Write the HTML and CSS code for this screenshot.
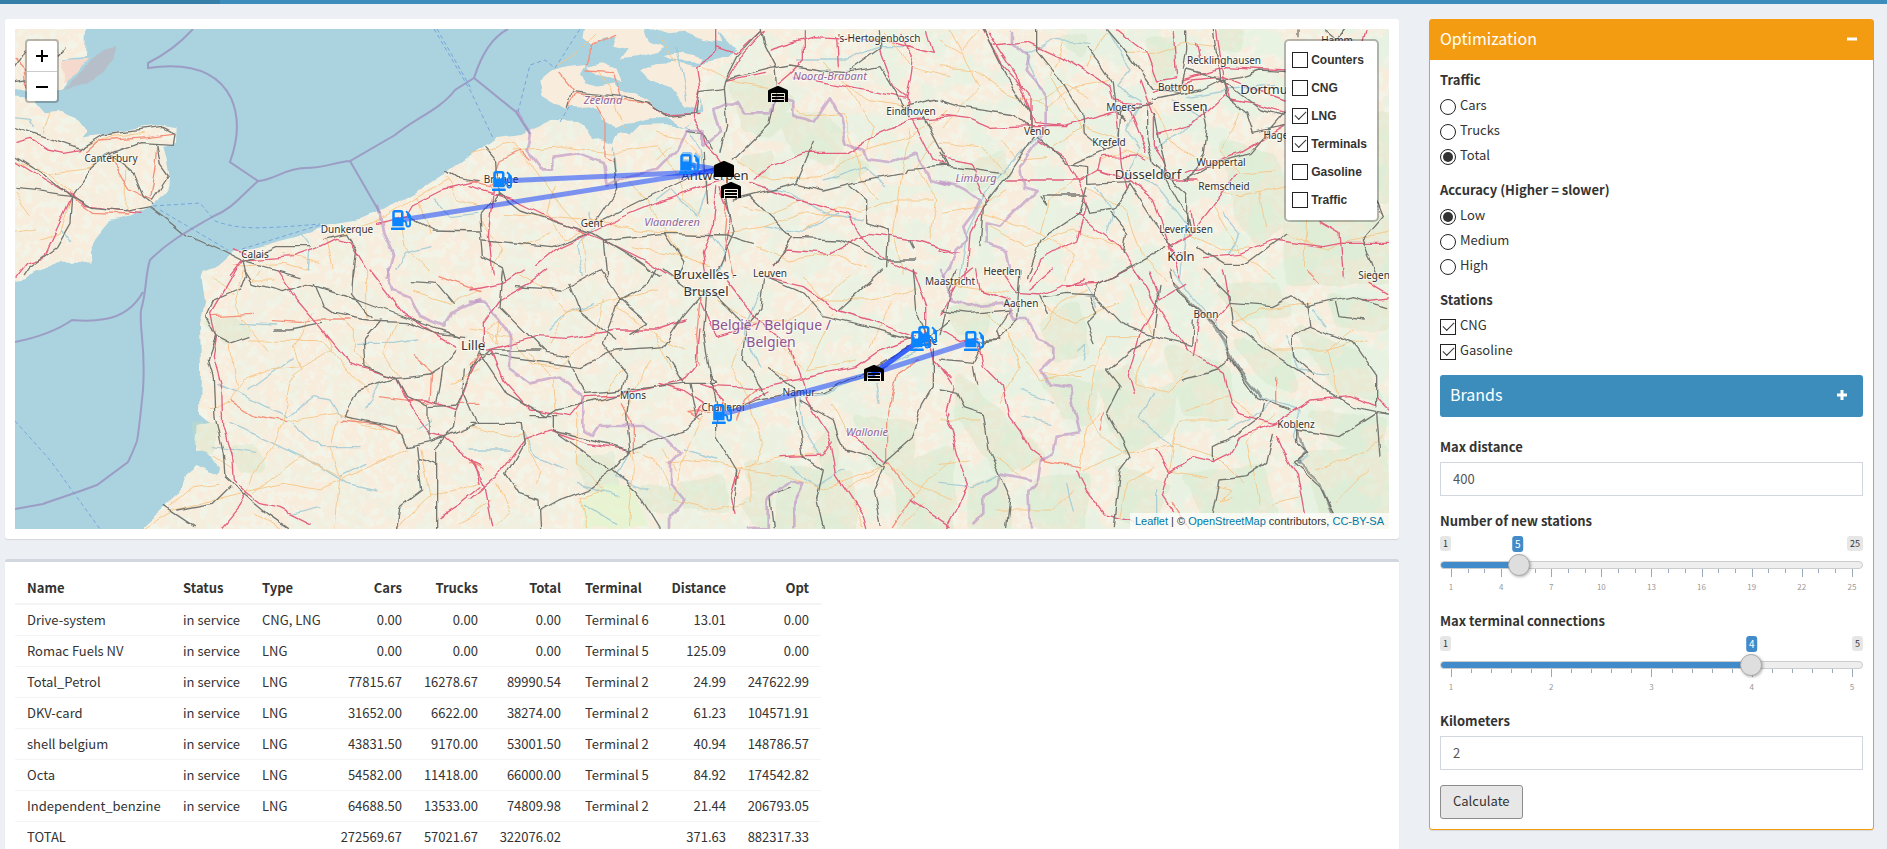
FILE: index.html
```html
<!DOCTYPE html>
<html lang="en">
<head>
<meta charset="utf-8">
<title>Station optimization</title>
<link rel="stylesheet" href="styles.css">
</head>
<body>
<header class="topbar"><div class="topbar-brand"></div></header>
<main class="layout">
<div class="main-col">
<section class="box map-box">
<div class="map">
<svg class="map-canvas" viewBox="15 29 1374 500" preserveAspectRatio="xMidYMid slice" role="img" aria-label="Map of Belgium">
<defs>
<filter id="woods" x="0" y="0" width="100%" height="100%">
<feTurbulence type="fractalNoise" baseFrequency=".03 .035" numOctaves="6" seed="8"/>
<feColorMatrix values="0 0 0 0 .80  0 0 0 0 .89  0 0 0 0 .76  8 0 0 0 -3.7"/>
</filter>
<filter id="fields" x="0" y="0" width="100%" height="100%">
<feTurbulence type="fractalNoise" baseFrequency=".12" numOctaves="3" seed="21"/>
<feColorMatrix values="0 0 0 0 .89  0 0 0 0 .92  0 0 0 0 .83  0 7 0 0 -3.400"/>
</filter>
<filter id="wiggle" x="0" y="0" width="100%" height="100%">
<feTurbulence type="fractalNoise" baseFrequency=".045" numOctaves="2" seed="4" result="n"/>
<feDisplacementMap in="SourceGraphic" in2="n" scale="8" xChannelSelector="R" yChannelSelector="G"/>
</filter>
<linearGradient id="fade" x1="0" x2="1" y1="0" y2="0">
<stop offset="0" stop-color="#fff" stop-opacity=".15"/><stop offset=".45" stop-color="#fff" stop-opacity=".5"/><stop offset=".68" stop-color="#fff" stop-opacity=".85"/><stop offset="1" stop-color="#fff"/>
</linearGradient>
<mask id="east"><rect x="0" y="0" width="1400" height="560" fill="url(#fade)"/></mask>
<symbol id="pump" viewBox="0 0 512 512"><path d="M336 448H16c-8.800 0-16 7.200-16 16v32c0 8.800 7.200 16 16 16h320c8.800 0 16-7.200 16-16v-32c0-8.800-7.200-16-16-16zm157.200-340.700l-81-81c-6.200-6.200-16.400-6.200-22.600 0l-11.300 11.300c-6.200 6.200-6.200 16.400 0 22.600L416 97.900V160c0 28.100 20.900 51.300 48 55.200V376c0 13.200-10.800 24-24 24s-24-10.800-24-24v-32c0-48.600-39.400-88-88-88h-8V64c0-35.300-28.700-64-64-64H96C60.700 0 32 28.700 32 64v352h288V304h8c22.100 0 40 17.900 40 40v27.800c0 37.700 27 72 64.500 75.900 43 4.300 79.500-29.500 79.500-71.700V152.600c0-17-6.800-33.300-18.800-45.300zM256 192H96V64h160v128z"/></symbol>
<symbol id="depot" viewBox="0 0 640 512"><path d="M504 352H136.400c-4.400 0-8 3.600-8 8l-.1 48c0 4.400 3.600 8 8 8H504c4.400 0 8-3.600 8-8v-48c0-4.400-3.600-8-8-8zm0 96H136.100c-4.400 0-8 3.600-8 8l-.1 48c0 4.400 3.600 8 8 8h368c4.400 0 8-3.600 8-8v-48c0-4.400-3.600-8-8-8zm0-192H136.600c-4.400 0-8 3.600-8 8l-.1 48c0 4.400 3.600 8 8 8H504c4.400 0 8-3.600 8-8v-48c0-4.400-3.600-8-8-8zm106.500-139L338.400 3.700a48.150 48.150 0 0 0-36.900 0L29.500 117C11.700 124.500 0 141.900 0 161.300V504c0 4.400 3.600 8 8 8h80c4.400 0 8-3.600 8-8V256c0-17.600 14.600-32 32.600-32h382.800c18 0 32.600 14.400 32.600 32v248c0 4.400 3.600 8 8 8h80c4.400 0 8-3.600 8-8V161.300c0-19.400-11.700-36.800-29.500-44.300z"/></symbol>
</defs>
<rect class="land" x="0" y="0" width="1400" height="560"/>
<rect x="0" y="0" width="1400" height="560" filter="url(#fields)" opacity=".8"/>
<g mask="url(#east)"><rect x="0" y="0" width="1400" height="560" filter="url(#woods)"/></g>
<g filter="url(#wiggle)">
<rect x="0" y="0" width="1400" height="560" fill="none"/>
<!-- north-west -->
<g transform="scale(.33333)">
<path class="sea" d="M258 80L255 170 185 178 215 200 190 270 30 272V295L100 300 135 340 180 335 240 360 262 390 245 412 300 405 400 388 490 378 530 385 528 425 490 435 500 480 508 520 505 560 470 600 440 625 380 650 330 662 290 710 275 740 277 792 225 785 180 785 150 805 110 812H610L650 800 700 755 800 735 900 705 960 680 1080 660 1150 630 1240 580 1340 515 1450 435V80Z"/>
<path class="sand" d="M185 180L262 176 215 232 190 250Z"/>
<path class="flat" d="M352 140L300 150 190 270 270 250 320 210Z"/>
<path class="minor" d="M45 480L150 520 215 580M130 400L150 340M150 520L270 505 330 460M380 500L378 640M90 640L45 580M215 590L180 700 120 720M45 700L110 690M250 440L330 410 430 400M980 710L1000 810M1000 710L1120 670 1250 590 1340 540M1250 590L1290 700M1205 680L1215 740 1290 810M1340 530L1370 600 1440 620M700 800L850 790 930 810M850 760L960 790"/>
<path class="river" d="M45 350L90 355 100 380M185 690L215 730M900 700L930 740 925 810M1190 810L1220 760 1290 740M1300 600L1350 650 1430 640"/>
<path class="pink" d="M45 430L90 418 140 450 190 460 240 452M45 480L140 540 215 585 260 620 340 632 420 640M45 835L80 790 130 775 215 590M690 830L730 780 880 770 950 745 1010 715 1050 725 1100 810M1130 670L1220 650 1240 615 1330 570 1440 545M700 750L740 760"/>
<path class="red" d="M260 455L300 420 440 410 520 400M470 440L465 500 450 590M330 470L390 570 455 600M225 600L280 640 380 645M45 175L75 205 80 260"/>
<path class="rail" d="M45 380L130 410 240 448 310 405 490 382 525 400 520 430 425 425 330 460 270 510 215 590 110 575 45 568M45 465L130 520 215 590 280 625 370 635 450 620 505 660 560 705 660 750 730 785 740 830M215 590L210 670 170 740 90 800 70 830M330 465L400 520 430 590 455 610M470 430L480 490 505 525 455 600M730 785L830 740 930 740M975 715L1040 700 1070 750 1060 830M740 785L900 830M1235 655L1300 690 1440 693M1340 515L1370 535 1440 545M45 200L75 150M45 245L80 240M175 165L198 140"/>
<path class="border" d="M1135 620L1150 700 1178 760 1160 830"/>
</g>
<!-- north -->
<g transform="translate(470 0) scale(.33333)">
<path class="sea" d="M-5 465L80 415 150 405 240 365 330 370 370 410 430 430 445 395 480 405 510 375 600 372 655 385 640 395 690 400 650 380 700 330 690 260 650 215 690 190 780 170 800 150 760 110 730 80H-5Z"/>
<path class="land" d="M205 245L240 215 300 200 345 195 330 215 345 250 380 260 430 250 450 275 500 280 550 320 585 350 640 345 680 335 690 350 640 380 600 355 540 355 500 365 450 370 435 378 400 365 390 335 350 320 310 318 290 330 240 300 215 285ZM345 80L340 110 370 135 400 110 440 105 430 140 470 150 450 180 500 175 560 160 580 140 540 125 525 80ZM345 200L400 190 440 205 455 240 430 235 380 225ZM510 210L560 190 620 185 680 200 700 260 690 330 650 320 600 260 540 240ZM540 80L600 100 640 95 700 120 760 130 740 80ZM580 165L640 155 700 170 690 185 620 180ZM760 80L800 110 890 100 900 80Z"/>
<path class="forest" d="M790 260L900 240 960 300 900 400 830 380ZM940 360L1050 350 1120 420 1080 480 980 450ZM1130 470L1180 500 1150 530 1100 520ZM830 480L900 470 880 520Z"/>
<path class="river" d="M560 600L600 570 680 650 710 560 690 450 660 400M360 640L375 680 320 740 340 830M720 700L760 760 740 830M860 560L960 580 1060 640 1180 660M980 180L1130 180 1230 140 1320 140M620 140L650 300M880 680L1000 700 1100 640M430 440L440 560M1060 540L1180 500 1250 560"/>
<path class="minor" d="M0 460L130 430 200 520 250 590 340 690 350 820M130 450L280 440 430 460 560 440 620 510 640 600 690 650M260 200L330 150 380 100M380 210L430 290 460 380M570 110L620 190M250 560L230 640 280 720 340 690M100 640L250 650 380 660 500 690 640 700 740 705 880 680 990 640 1110 650M480 540L530 600 590 700 640 790M800 480L900 540 1050 530 1190 450 1320 410 1430 330M690 470L640 420 560 400M700 200L800 250 920 270 1000 350 1120 340 1150 440 1180 540 1230 600M1320 390L1290 540 1270 700 1300 820M1060 190L1180 300 1320 320M1000 700L1100 620 1170 640 1280 600 1390 600M480 740L600 760 720 800M860 740L960 780 1080 760 1190 800M1130 260L1210 380 1190 450M1240 100L1330 200 1440 230M30 660L100 750 60 820M150 740L240 700M560 480L600 440M820 620L900 640 1000 600M1400 420L1340 500 1400 600 1380 720"/>
<path class="red" d="M345 195L370 130 440 100M300 320L320 280 450 300 530 310M380 320L405 360 405 470 430 480M270 220L310 270M345 210L430 215 450 290M0 545L60 560 90 480 150 450 180 480M770 590L760 700 790 830"/>
<path class="pink" d="M740 80L740 150 680 200 690 270 670 350 700 400 710 440 740 470 760 500M740 140L800 160 870 95M880 95L820 160 765 245 880 220M900 150L1030 110 1240 120 1390 160 1370 95M1000 95L1000 180 960 220 925 250M970 230L1130 260 1310 295 1330 180 1290 100M1230 150L1270 260 1310 290 1320 350M850 540L900 500 1000 460 1130 460 1230 400 1320 360 1440 350M840 550L980 600 1130 640 1180 720 1250 780 1340 820M760 540L670 570 560 610 440 660 380 690 270 740 200 800M0 560L130 600 250 660 400 720 520 780 600 830M70 570L55 700 70 830M740 560L730 680 700 760 710 820M750 560L780 640 760 780M910 800L950 750 1080 760 1200 700 1330 720 1440 750M1330 360L1390 480 1440 500M530 310L580 345 690 340M1105 200L1100 110"/>
<path class="rail" d="M295 325L310 275 460 290 530 310 590 350 680 340 690 275 760 265 765 240 900 205 960 195 1050 210 1140 215 1230 200 1290 300 1320 350M870 85L880 130 915 200 920 270 900 370 830 440 790 480M760 260L770 380 750 460M650 395L700 400 730 450M45 440L80 480 85 580 30 650 40 770 100 800 110 840M85 580L150 630 270 670 370 700 470 760 570 830M380 660L440 570 430 470M380 670L520 600 640 540 730 500M40 720L250 740 350 700M400 720L580 700 770 705 850 730M770 590L790 700 740 810M790 600L910 570 980 550 1060 570 1140 550 1300 520 1310 505 1440 498M840 590L970 715 910 800M970 715L1110 720 1240 780 1340 780M1140 555L1190 600 1190 670 1255 690 1250 800M980 550L1030 430M1140 210L1230 145 1225 95M1360 350L1440 500M1310 320L1400 300M580 700L640 790 620 830M700 460L710 610M400 720L410 830M870 95L800 170 765 240M1320 720L1330 750"/>
<path class="border" d="M135 335L180 400 170 450 210 505 250 505 250 470 320 460 400 490 410 560 470 530 560 510 620 450 650 390 700 390 700 440 750 400 730 330 800 300 820 340 900 340 920 290 970 300 970 350 1030 370 1080 295 1110 350 1130 430 1180 450 1190 480 1260 490 1340 460 1380 540 1440 555"/>
</g>
<!-- north-east -->
<g transform="translate(940 0) scale(.33333)">
<path class="forest" d="M380 120L430 110 420 160ZM630 130L690 120 700 200 650 240ZM850 90L900 100 890 140 850 140ZM850 430L1000 480 1040 640 960 720 900 650 880 540ZM1040 680L1350 660 1350 840 1050 840ZM80 500L180 470 200 520 100 560ZM1320 350L1350 360 1350 600 1300 600Z"/>
<path class="river" d="M500 90L570 210 530 260 600 300 560 390 600 450 560 520 650 560 740 680 720 840M300 400L200 500 130 590 80 700 60 840M450 130L340 120 260 160 300 270M640 440L720 400 780 350 700 300M850 640L900 700 860 760M740 290L860 270 1000 250M1000 350L1050 330M470 560L520 640 500 700"/>
<path class="minor" d="M0 200L100 210 200 280 330 320 400 260 520 240M30 90L120 260 60 330 0 380M0 430L130 440 200 520M370 130L330 230 390 330 430 400M400 540L330 600 300 700 130 640M440 560L560 640 600 760 680 840M340 440L430 380 540 420M770 540L900 590 1040 560M440 200L500 100M900 340L840 450 900 520 1000 510M820 620L900 760 1000 830M300 700L400 760 380 840M0 640L120 620 200 570M740 700L850 750 930 740M1040 700L1160 750 1200 730 1340 700M150 680L260 740 400 690 540 740M450 290L380 250 290 310M1100 660L1090 800M630 300L690 420 760 470M560 160L640 160 730 130 840 140M480 480L560 450 640 480M120 90L60 160 0 120M180 420L230 480 320 470M960 580L980 680"/>
<path class="pink" d="M125 85L190 200 270 290 270 390M145 100L230 230 280 370 380 380M160 135L260 125 400 190 510 260 520 300 600 310M0 345L80 355 150 385 270 380 370 380 540 330 640 310M530 90L620 160 650 240 710 230 700 95M830 90L850 240 870 300 930 310 1035 340M730 240L860 200 1035 210M640 280L760 240 850 230 950 270 1035 300M200 540L420 540 470 510 570 540 640 600 680 700 700 760M290 420L380 480 430 570 440 620 410 720 300 780 270 840M410 640L460 680 540 740 600 840M600 240L640 350 640 430 690 540 770 540M530 330L545 500 560 560M470 510L480 470 590 465 620 480M730 520L900 460 1035 380M750 640L760 700 690 740 720 830M790 770L900 760 1000 720 1150 740 1200 730 1340 730M1140 665L1200 700 1210 830M0 470L90 490 140 600 90 700 80 840M0 750L60 760M770 680L840 590 890 520M650 400L760 370 860 280M620 460L570 330M1280 90L1270 130M780 180L770 130"/>
<path class="rail" d="M130 90L200 230 270 340 270 390M290 85L290 150 370 250 425 340 430 400 490 450M0 300L60 320 220 345 270 390M290 410L380 490 440 500 440 550 570 545M400 490L540 430 545 330 640 310M500 90L550 150 640 270 720 280 740 210 850 240 860 290M440 140L480 190 520 250 530 330 560 360M740 90L740 150 730 210M820 90L840 240 900 230 960 210 1035 215M620 310L620 410 640 490 740 580 740 680M640 340L660 440 680 540 740 650 750 700M280 410L200 530 130 620 120 740M180 520L0 495M440 560L420 640 300 720 260 830M570 550L660 690 700 740M730 540L800 500 930 460 1035 340M300 590L320 615 310 585 440 585M430 600L450 640 520 630 570 550M510 640L560 700 550 760M520 830L680 740M770 740L850 790 920 790 1000 730 1040 700M640 300L780 270 840 240 960 330 1035 350M860 290L920 340 940 400 1035 380M790 330L800 380 790 460 740 540M1310 600L1330 650 1270 720 1310 830M1080 90L1080 110M1160 90L1190 115 1210 90M0 460L20 490"/>
<path class="border" d="M210 90L210 130 270 170 260 210 320 290 320 380 240 500 250 560 290 570 180 680 140 670 140 730 200 750 210 810M0 545L60 560 80 570 120 600 100 640 70 680 80 720 50 750 30 800 10 830"/>
</g>
<!-- south-west -->
<g transform="translate(0 270) scale(.33333)">
<path class="sea" d="M30 38L75 30 110 -2H612L605 20 615 100 600 160 603 300 600 430 630 455 590 465 585 545 620 545 660 590 655 615 590 585 560 610 540 670 500 705 440 755 405 790H30Z"/>
<path class="forest" d="M700 540L760 540 780 590 730 590ZM630 160L700 150 740 190 680 210ZM590 470L640 470 630 540 600 530Z"/>
<path class="river" d="M650 340L740 380 860 440 940 380 990 390 1020 440M690 460L820 520 960 590 1040 640 1130 660M640 530L770 550M1020 620L1100 580M1070 220L1180 220 1250 210M720 160L830 165M1250 480L1300 450M870 450L960 530 1080 530M750 360L830 300 880 260M870 730L960 710M1100 420L1140 340"/>
<path class="minor" d="M690 395L730 330 810 300 900 290 1000 240 980 190M750 210L970 212 1060 320 1110 370M690 220L700 300 710 350M730 0L700 110 800 240M780 0L760 30 820 30M850 450L870 330 905 300 880 230 940 130M850 455L1010 430 1080 460 1200 490M850 455L820 530 760 610 740 670M1010 450L990 530 1020 620 1005 775M740 665L850 640 960 660 1020 630 1220 540M1020 620L900 560 760 670M510 710L580 650 660 640M400 790L520 720 730 670M1100 0L1100 140M1000 130L1060 180 1060 240 1120 300M1200 320L1150 250 1190 150M1290 680L1260 540M1290 680L1440 640M1190 770L1290 680M630 410L690 400M640 20L700 80M1240 60L1350 100 1440 60M1350 340L1440 300M640 560L700 600M1380 760L1440 730M770 730L840 775"/>
<path class="red" d="M640 137L760 130M820 155L900 160 960 150 1050 150M695 395L760 435 860 455M1020 450L1130 460 1210 500M1290 390L1295 310 1240 260M1140 380L1290 400M1370 400L1440 400M1320 20L1440 65"/>
<path class="pink" d="M710 0L670 70 635 130 650 200 640 260 665 350 668 470 695 560 700 630 740 670 780 700 840 715 930 760M740 670L715 710 660 775M830 0L890 90 960 170 1050 280 1190 325 1215 380 1250 440 1290 490 1330 500 1420 580 1440 640M1110 0L1210 130 1370 230M1440 260L1400 340 1370 420 1280 390 1220 390M1320 740L1380 700 1440 650M1420 580L1440 590"/>
<path class="rail" d="M735 0L760 40 850 65 920 40 1080 90 1240 150 1380 200M735 20L720 60 640 95 620 140 650 200 690 220 750 200M650 200L625 270 640 320 645 440 670 550 675 620 740 680 800 730 865 775M690 650L640 700 530 720M940 40L970 110 1000 130 1100 150 1220 155 1310 190 1400 200M1140 150L1090 210 1095 290 1190 325 1290 315 1330 290 1370 240M1190 325L1220 380 1290 410 1370 405 1440 240M1190 325L1070 360 1030 440 1190 470 1220 530 1290 515 1330 500M1290 410L1290 510M1370 405L1360 470 1310 530 1310 775M1250 530L1265 660 1200 710 1190 775M1330 290L1310 400M1390 300L1385 360 1430 460 1330 500M1060 0L1055 70 1110 140M490 710L580 770M820 180L870 180 970 160M1240 35L1310 40 1360 100M1255 565L1310 585"/>
<path class="border" d="M1160 0L1180 60 1230 80 1260 140 1330 170 1350 130 1440 90"/>
</g>
<!-- south -->
<g transform="translate(470 270) scale(.33333)">
<path class="forest" d="M330 570L420 560 430 640 360 650ZM520 660L620 670 600 720 540 710ZM640 650L750 630 760 720 650 700ZM960 600L1130 620 1150 770 920 770ZM830 700L900 660 880 770ZM1170 450L1330 470 1300 640 1200 560ZM1280 600L1440 540V775H1300ZM1090 480L1040 530 1090 620ZM840 580L940 590 930 640 850 650Z"/>
<path class="pale" d="M330 690Q400 630 500 650L530 775H340Z"/>
<path class="river" d="M240 180L290 130 370 100M990 380L1060 370 1200 310 1330 250 1400 180M990 380L1000 480 1050 560M150 480L200 560 290 600M480 540L440 620 530 660M340 700L440 760M870 70L820 190 870 290M960 590L1040 650 1120 600M640 540L740 570M1220 340L1230 400M0 540L120 540M320 640L450 680"/>
<path class="minor" d="M0 180L120 200 190 280 260 290 380 190 400 90M140 10L230 60 290 130 440 90 560 60M290 130L240 220M440 110L560 200 640 240M460 290L400 390 330 400M550 190L600 300M740 90L850 160 960 150 1080 70 1140 10M1000 20L1060 90 1200 90 1340 60M830 190L780 290 830 380 880 520 840 600 840 700M890 290L960 330M1090 130L1010 300 1160 270M1260 100L1200 230M700 440L640 560 610 690 740 720 830 700M805 595L700 570 590 580M810 595L960 620 1060 660 1250 580M805 595L940 560 1030 550M480 540L560 570 600 660M480 540L490 600 475 770M320 430L320 580 400 660 330 680M180 250L250 330 260 440M0 470L120 500 160 490M160 500L210 600 200 640M80 640L120 730 80 770M330 680L350 770M1250 580L1340 640 1440 690M1320 680L1440 570M1250 580L1130 660 1180 770M1090 400L1130 480M580 540L620 600M1000 300L920 200M1360 700L1300 770M540 270L460 440M60 690L0 740"/>
<path class="stripe" d="M50 180L90 150 80 220ZM70 205L100 170"/>
<path class="red" d="M1340 270L1280 310 1250 450 1250 570 1330 680 1270 770M790 640L810 600M690 450L660 430 720 420M800 450L820 390 870 345M0 580L40 600M490 550L490 470 450 400M0 290L30 250M690 80L680 200 690 280"/>
<path class="pink" d="M0 60L100 40 160 0M40 240L40 160 90 90 180 40 230 0M50 240L200 200 290 205 440 180 560 180 650 150M60 240L100 330 180 420 300 440 350 380 450 375 560 350 640 330 680 280 690 180M0 690L80 620 160 510 240 480 350 520 480 540M0 570L40 640 65 770M690 90L740 200 870 160M680 340L720 350 850 355 980 330 1050 310 1160 290 1230 240 1340 200M830 400L900 360M770 30L870 160 960 230 1000 340 1010 390 1080 500 1100 620 1180 740 1190 775M870 20L1000 50 1100 120 1200 150 1330 200M1330 0L1370 110 1370 200 1390 270 1440 320M570 340L640 360 700 400 680 440M1440 430L1430 460 1440 480M720 350L760 390 750 410M930 560L1060 555 1090 510M800 600L780 680 795 730M1130 480L1250 580M1320 690L1440 770"/>
<path class="rail" d="M30 250L110 370 230 440 260 420 430 380 480 365M30 250L190 270 330 290 440 240 580 230 640 140 690 80M0 300L60 240 210 240M100 0L90 110 230 250 290 260M140 50L280 60 390 0M300 40L330 120 440 210M390 0L450 90 400 220 470 310 460 360 350 370 290 270M560 0L540 40 450 90 530 160 480 190M580 0L660 60 710 70 700 190 720 310 740 400 740 500 800 600 790 720M480 360L640 340 740 340 720 310M660 340L680 440M700 430L640 480 480 540 250 480 250 440M480 365L470 440 480 540 430 600 350 660 270 690 215 720M0 460L150 460 160 520 110 610 150 670 210 690 215 775M430 600L500 660 570 775M180 440L260 440M790 420L860 390 960 370 1060 365 1180 310 1320 230M730 70L830 170 820 270 890 370M890 290L970 355 990 490 1000 560 1060 600 1040 690 1060 775M990 390L1090 450 1120 540 1200 560 1240 590 1210 660 1230 760M1240 580L1330 500 1360 400 1390 350 1390 240M880 30L870 120 820 180M880 20L1000 70 1060 140 1190 170 1330 210M1110 120L1240 0M1330 0L1340 120 1380 200 1440 150M910 770L900 680 960 650M590 260L640 340M250 480L420 600"/>
<path class="border" d="M0 95L40 95 90 150 120 190 120 300 180 340 270 320 340 380 340 480 370 495 390 465 520 465 590 510 630 550 600 580 600 640 640 690 600 740 600 775M840 775L890 770 890 690 960 630 1000 640 970 700 970 775"/>
</g>
<!-- south-east -->
<g transform="translate(940 270) scale(.33333)">
<path class="forest" d="M310 160L400 110 440 240 350 260ZM480 320L560 300 620 380 700 350 680 480 560 540 510 440ZM690 240L860 300 860 440 740 420ZM900 220L1040 260 1060 350 980 330ZM1120 430L1330 460 1310 560 1180 500ZM1080 180L1250 260 1310 380 1200 360ZM850 60L1000 50 1040 120 900 140ZM60 330L180 440 300 560 180 600 60 440ZM740 620L960 600 1000 720 820 770ZM1100 560L1330 540 1340 770 1160 740ZM540 600L680 650 620 770 540 740ZM100 660L180 620 200 770 100 770ZM290 640L440 620 420 770 280 760ZM320 330L460 350 440 460 380 430ZM1180 90L1340 100 1330 170 1200 160ZM40 120L140 110 130 180 60 180Z"/>
<path class="river" d="M700 0L760 80 830 160 870 260 960 380 1080 420 1060 500 1100 560 1060 590M410 240L440 220 430 270M240 360L340 400M440 40L470 110M0 640L100 650 180 610M650 660L650 770M860 480L940 440 1000 390M1040 200L1080 300 1160 310M640 370L600 440 700 530M1120 120L1160 170M380 640L400 720M250 440L330 460"/>
<path class="minor" d="M0 40L130 60 210 70M140 130L210 190 240 290 180 400M210 200L300 330 470 290 500 200 600 200M300 100L400 160 530 100M440 60L360 100 310 180M470 290L440 420 480 500 560 550 700 530 720 450 860 450M570 40L640 200 580 340 680 370 750 300M700 520L830 560 910 640M700 530L690 600 800 620M0 450L120 450M300 310L420 320M160 560L240 620M430 600L560 540M170 720L330 720 400 660M640 590L560 640 540 740M860 100L1000 240 1160 240 1280 210M940 440L860 380 740 420M1160 240L1200 380M1000 430L920 520 960 700M1130 600L1280 540 1330 500M1000 700L1080 680M880 160L960 120 1110 100M1150 250L1240 180M420 600L440 480 480 430M830 650L870 660 840 690 870 680M1180 700L1280 600M0 580L90 570M240 600L300 560"/>
<path class="red" d="M480 480L490 430M1010 320L1010 400M300 570L420 590M700 700L750 780M1100 0L1140 40"/>
<path class="pink" d="M180 0L230 70 300 75 370 45 480 40 560 0M100 0L50 40 0 130M0 180L60 215 110 200 130 290 190 350 210 440 240 480 270 540 310 570M110 0L120 60 210 90M580 0L620 50 650 105 710 200 740 240 790 270 850 310 870 400 890 430 1000 460 1080 410 1110 390 1230 380 1310 410M650 105L600 190 565 320 580 370M780 130L760 260M0 290L40 350 20 430 50 550 85 640 50 720 20 775M410 600L440 660 500 735 580 755M650 540L690 605 670 680 700 725M690 605L760 560 820 575 870 550 900 500 1010 460M1010 500L1040 570 1070 620 1090 730M850 0L870 100 830 150M630 0L660 90 740 40M270 60L340 0M1270 90L1350 80M1310 380L1350 420M1290 40L1340 70M440 30L380 50"/>
<path class="rail" d="M0 200L30 60 50 0M0 120L90 130 210 120 170 180 180 210 130 215 100 280 0 270M240 0L230 150 170 210 120 210M310 80L380 70 460 75 480 40 560 0M460 75L540 160 640 200 755 230 760 150M640 200L560 250 500 300 540 350 500 430 550 520 570 560 540 600 520 770M660 40L640 200M690 0L700 50 790 130 860 200 870 270 950 380 1050 420M870 270L830 300 730 330M790 0L870 80 880 160 980 240 1090 310 1170 370 1240 410 1340 430M870 100L1000 110 1060 80 1100 110 1240 80 1340 110M1100 100L1110 170 1060 200 1060 260 1120 310M1110 170L1240 220 1310 320 1310 410M1070 470L1070 520 1100 550 1060 580 1140 650 1180 730M1000 490L980 580 920 620 840 630 820 730M1070 480L1200 500 1310 430 1320 560M970 400L960 440 880 500 820 530 820 570M0 360L50 370 70 410 130 430 150 550 210 680 200 770M100 290L110 345M450 80L470 130 440 160 465 215M1190 100L1200 140 1270 150M1310 430L1350 435M300 80L325 130"/>
<path class="railb" d="M700 40L800 140 855 210 880 280 960 375M1070 480L1095 550 1070 575 1140 640 1175 730"/>
<path class="border" d="M0 0L20 40 30 90 90 110 200 100 220 150 260 150 290 210 340 230 340 260 300 300 330 340 390 350 400 410 420 490 350 500 340 550 300 570 290 640 265 660 270 775M270 630L180 610 170 650 130 680 130 730 100 760"/>
</g>
</g>
<g class="sea-lines">
<path d="M193 29Q174 50 148 63V68C190 62 218 72 231 98C240 118 238 140 230 162L258 181C275 180 285 168 305 168C325 168 335 162 350 161L395 135C415 118 440 110 455 90L474 78L516 112L530 134M258 181C240 197 232 209 212 217C190 230 170 240 150 260C145 275 147 290 141 310C139 330 146 345 143 390C140 420 139 430 137 441Q133 452 128 462L97 485C70 495 60 498 43 504L15 509M143 292Q130 315 105 319Q90 322 72 320C55 332 35 338 15 342M350 161L380 213M474 78Q486 40 508 29"/>
<path class="ferry" d="M434 29L470 90 494 140M437 29L472 90M518 112L530 65 545 60 555 68 580 29M153 206L200 203 215 221C240 230 260 229 320 224M160 210L228 250M15 421L50 460 100 529M242 249L320 225M560 122L570 105"/>
</g>
<g class="labels">
<text x="111" y="162">Canterbury</text><text x="347" y="233">Dunkerque</text><text x="255" y="258">Calais</text>
<text x="879" y="42">'s-Hertogenbosch</text><text x="911" y="115">Eindhoven</text><text x="501" y="183">Brugge</text><text x="592" y="227">Gent</text><text x="770" y="277">Leuven</text>
<text x="1037" y="135">Venlo</text><text x="1224" y="64">Recklinghausen</text><text x="1176" y="91">Bottrop</text><text x="1121" y="111">Moers</text><text x="1109" y="146">Krefeld</text><text x="1221" y="166">Wuppertal</text><text x="1224" y="190">Remscheid</text><text x="1186" y="233">Leverkusen</text><text x="1337" y="44">Hamm</text><text x="1279" y="139">Hagen</text><text x="1002" y="275">Heerlen</text><text x="950" y="285">Maastricht</text><text x="1374" y="279">Siegen</text><text x="1021" y="307">Aachen</text><text x="1206" y="318">Bonn</text><text x="1296" y="428">Koblenz</text>
<text x="633" y="399">Mons</text><text x="723" y="411">Charleroi</text><text x="799" y="396">Namur</text><text x="925" y="345">Liège</text>
<g class="city"><text x="715" y="180">Antwerpen</text><text x="705" y="279">Bruxelles -</text><text x="706" y="296">Brussel</text><text x="473" y="350">Lille</text><text x="1148" y="179">Düsseldorf</text><text x="1190" y="111">Essen</text><text x="1272" y="94">Dortmund</text><text x="1181" y="261">Köln</text></g>
<g class="country"><text x="771" y="330">België / Belgique /</text><text x="771" y="347">Belgien</text></g>
<g class="region"><text x="830" y="80">Noord-Brabant</text><text x="603" y="104">Zeeland</text><text x="672" y="226">Vlaanderen</text><text x="976" y="182">Limburg</text><text x="867" y="436">Wallonie</text></g>
</g>
<g class="routes"><path d="M401 220L723 169"/><path d="M503 181L723 171"/><path d="M690 165L723 170"/><path d="M874 373L723 414"/><path d="M874 373L974 341"/><path d="M874 373L920 340"/><path d="M874 373L927 336"/></g>
<g class="pumps"><use href="#pump" x="391" y="210" width="20" height="20"/><use href="#pump" x="492" y="171" width="20" height="20"/><use href="#pump" x="679" y="154" width="20" height="20"/><use href="#pump" x="680" y="152" width="20" height="20" opacity=".45"/><use href="#pump" x="910" y="331" width="20" height="20"/><use href="#pump" x="917" y="326" width="20" height="20"/><use href="#pump" x="964" y="331" width="20" height="20"/><use href="#pump" x="712" y="404" width="20" height="20"/></g>
<g><use href="#depot" x="768" y="86" width="20" height="16"/><use href="#depot" x="714" y="161" width="20" height="16"/><path d="M716 166h16v11h-16z"/><use href="#depot" x="721" y="182" width="20" height="16"/><use href="#depot" x="864" y="365" width="20" height="16"/></g>
</svg>
<div class="zoom"><button type="button" aria-label="Zoom in"><svg viewBox="0 0 14 14"><path d="M7 1v12M1 7h12"/></svg></button><button type="button" aria-label="Zoom out"><svg viewBox="0 0 14 14"><path d="M1 7h12"/></svg></button></div>
<div class="layers">
<label><input type="checkbox">Counters</label>
<label><input type="checkbox">CNG</label>
<label><input type="checkbox" checked>LNG</label>
<label><input type="checkbox" checked>Terminals</label>
<label><input type="checkbox">Gasoline</label>
<label><input type="checkbox">Traffic</label>
</div>
<div class="credit"><a href="#">Leaflet</a> | © <a href="#">OpenStreetMap</a> contributors, <a href="#">CC-BY-SA</a></div>
</div>
</section>
<section class="box table-box">
<table class="stations">
<colgroup><col class="c-name"><col class="c-status"><col class="c-type"><col class="c-cars"><col class="c-trucks"><col class="c-total"><col class="c-terminal"><col class="c-distance"><col class="c-opt"></colgroup>
<thead><tr><th>Name</th><th>Status</th><th>Type</th><th class="num">Cars</th><th class="num">Trucks</th><th class="num">Total</th><th>Terminal</th><th class="num">Distance</th><th class="num">Opt</th></tr></thead>
<tbody>
<tr><td>Drive-system</td><td>in service</td><td>CNG, LNG</td><td class="num">0.00</td><td class="num">0.00</td><td class="num">0.00</td><td>Terminal 6</td><td class="num">13.01</td><td class="num">0.00</td></tr>
<tr><td>Romac Fuels NV</td><td>in service</td><td>LNG</td><td class="num">0.00</td><td class="num">0.00</td><td class="num">0.00</td><td>Terminal 5</td><td class="num">125.09</td><td class="num">0.00</td></tr>
<tr><td>Total_Petrol</td><td>in service</td><td>LNG</td><td class="num">77815.67</td><td class="num">16278.67</td><td class="num">89990.54</td><td>Terminal 2</td><td class="num">24.99</td><td class="num">247622.99</td></tr>
<tr><td>DKV-card</td><td>in service</td><td>LNG</td><td class="num">31652.00</td><td class="num">6622.00</td><td class="num">38274.00</td><td>Terminal 2</td><td class="num">61.23</td><td class="num">104571.91</td></tr>
<tr><td>shell belgium</td><td>in service</td><td>LNG</td><td class="num">43831.50</td><td class="num">9170.00</td><td class="num">53001.50</td><td>Terminal 2</td><td class="num">40.94</td><td class="num">148786.57</td></tr>
<tr><td>Octa</td><td>in service</td><td>LNG</td><td class="num">54582.00</td><td class="num">11418.00</td><td class="num">66000.00</td><td>Terminal 5</td><td class="num">84.92</td><td class="num">174542.82</td></tr>
<tr><td>Independent_benzine</td><td>in service</td><td>LNG</td><td class="num">64688.50</td><td class="num">13533.00</td><td class="num">74809.98</td><td>Terminal 2</td><td class="num">21.44</td><td class="num">206793.05</td></tr>
<tr><td>TOTAL</td><td></td><td></td><td class="num">272569.67</td><td class="num">57021.67</td><td class="num">322076.02</td><td></td><td class="num">371.63</td><td class="num">882317.33</td></tr>
</tbody>
</table>
</section>
</div>
<aside class="panel">
<div class="panel-head"><h2>Optimization</h2><button type="button" class="tool" aria-label="Collapse"><svg viewBox="0 0 12 12"><path d="M1 6h10"/></svg></button></div>
<form class="panel-body">
<fieldset><legend>Traffic</legend>
<label class="choice"><input type="radio" name="traffic">Cars</label>
<label class="choice"><input type="radio" name="traffic">Trucks</label>
<label class="choice"><input type="radio" name="traffic" checked>Total</label></fieldset>
<fieldset><legend>Accuracy (Higher = slower)</legend>
<label class="choice"><input type="radio" name="accuracy" checked>Low</label>
<label class="choice"><input type="radio" name="accuracy">Medium</label>
<label class="choice"><input type="radio" name="accuracy">High</label></fieldset>
<fieldset><legend>Stations</legend>
<label class="choice"><input type="checkbox" checked>CNG</label>
<label class="choice"><input type="checkbox" checked>Gasoline</label></fieldset>
<div class="brands"><h3>Brands</h3><button type="button" class="tool" aria-label="Expand"><svg viewBox="0 0 12 12"><path d="M1 6h10M6 1v10"/></svg></button></div>
<div class="field"><label for="dist">Max distance</label><input id="dist" class="text" type="text" value="400"></div>
<div class="field"><label for="count">Number of new stations</label>
<div class="slider" style="--pos:.1667">
<div class="badges"><span>1</span><span>25</span><output for="count">5</output></div>
<input id="count" type="range" min="1" max="25" value="5">
<div class="ticks"><i class="major">1</i><i></i><i></i><i class="major">4</i><i></i><i></i><i class="major">7</i><i></i><i></i><i class="major">10</i><i></i><i></i><i class="major">13</i><i></i><i></i><i class="major">16</i><i></i><i></i><i class="major">19</i><i></i><i></i><i class="major">22</i><i></i><i></i><i class="major">25</i></div>
</div></div>
<div class="field"><label for="conn">Max terminal connections</label>
<div class="slider" style="--pos:.75">
<div class="badges"><span>1</span><span>5</span><output for="conn">4</output></div>
<input id="conn" type="range" min="1" max="5" value="4">
<div class="ticks"><i class="major">1</i><i></i><i></i><i></i><i></i><i class="major">2</i><i></i><i></i><i></i><i></i><i class="major">3</i><i></i><i></i><i></i><i></i><i class="major">4</i><i></i><i></i><i></i><i></i><i class="major">5</i></div>
</div></div>
<div class="field"><label for="km">Kilometers</label><input id="km" class="text" type="text" value="2"></div>
<button type="button" class="calc">Calculate</button>
</form>
</aside>
</main>
</body>
</html>
```
FILE: styles.css
```css
* { box-sizing: border-box; }
body {
  margin: 0;
  background: #ecf0f5;
  color: #333;
  font: 13px/20px "Noto Sans CJK JP", "Noto Sans", sans-serif;
  overflow-x: hidden;
}
button, input { font: inherit; color: inherit; }
.topbar { height: 4px; background: #3c8dbc; }
.topbar-brand { width: 220px; height: 4px; background: #367fa9; }
.layout {
  display: grid;
  grid-template-columns: minmax(0, 1394fr) minmax(0, 445fr);
  gap: 30px;
  align-items: start;
  padding: 15px 13px 0 5px;
}
.main-col { display: grid; gap: 20px; }
.box { background: #fff; border-radius: 3px; box-shadow: 0 1px 1px rgba(0, 0, 0, .1); padding: 10px; }
.table-box { border-top: 3px solid #d2d6de; padding: 10px 10px 0; }

/* map */
.map { position: relative; height: 500px; overflow: hidden; background: #aad3df; }
.map-canvas { display: block; width: 100%; height: 100%; }
.land { fill: #f8eddd; }
.sand { fill: #f6d9cd; }
.sea { fill: #aad3df; }
.flat { fill: #b9b9c4; opacity: .8; }
.forest { fill: #cbe2bd; opacity: .3; stroke: #cbe2bd; stroke-width: 30; stroke-linejoin: round; }
.pale { fill: #e2f5cc; opacity: .7; }
.river, .minor, .red, .pink, .rail, .railb, .border, .stripe { fill: none; stroke-linejoin: round; stroke-linecap: round; }
.river { stroke: #9cc8d6; stroke-width: 4; opacity: .8; }
.minor, .stripe { stroke: #f8c583; stroke-width: 3; opacity: .9; }
.red { stroke: #f4917b; stroke-width: 4; }
.pink { stroke: #e4607f; stroke-width: 4; }
.rail { stroke: #777772; stroke-width: 4; }
.railb { stroke: #6e6e6a; stroke-width: 7; opacity: .6; }
.border { stroke: #bf93c4; stroke-width: 8; opacity: .65; }
.sea-lines path { fill: none; stroke: #9a93bf; stroke-width: 2; opacity: .85; }
.sea-lines .ferry { stroke: #6d9cdb; stroke-width: 1; stroke-dasharray: 4 3; }
.labels { font: 10px "Noto Sans", sans-serif; fill: #333; text-anchor: middle; paint-order: stroke; stroke: #fff; stroke-opacity: .6; stroke-width: 2px; }
.city { font-size: 13px; }
.country { font-size: 14px; fill: #8c5590; }
.region { font-style: italic; font-size: 11px; fill: #91669b; }
.routes path { stroke: #03f; stroke-opacity: .5; stroke-width: 5; stroke-linecap: round; }
.pumps { fill: #0a84ff; }
.zoom {
  position: absolute; left: 10px; top: 10px;
  display: grid;
  border: 2px solid rgba(0, 0, 0, .25); border-radius: 4px; background-clip: padding-box; background-color: #fff;
}
.zoom button { display: grid; place-items: center; width: 30px; height: 30px; padding: 0; border: 0; background: none; }
.zoom button + button { border-top: 1px solid #ccc; }
.zoom svg { width: 14px; height: 14px; stroke: #000; stroke-width: 2; }
.layers {
  position: absolute; right: 10px; top: 10px;
  padding: 5px 10px 6px 6px;
  border: 2px solid rgba(0, 0, 0, .25); border-radius: 5px; background-clip: padding-box; background-color: #fff;
  font: bold 12px/28px "Liberation Sans", sans-serif;
}
.layers label { display: flex; align-items: center; gap: 3px; height: 28px; }
.credit {
  position: absolute; right: 0; bottom: 0; padding: 0 5px;
  background: rgba(255, 255, 255, .7);
  font: 11px/16px "Liberation Sans", sans-serif;
}
.credit a { color: #0078a8; text-decoration: none; }

/* tick boxes and radios */
input[type="checkbox"], input[type="radio"] {
  appearance: none; display: grid; place-items: center; flex: none;
  width: 16px; height: 16px; margin: 0; border: 1px solid #222; background: #fff;
}
input[type="radio"] { border-radius: 50%; }
input[type="radio"]:checked::before { content: ""; width: 10px; height: 10px; border-radius: 50%; background: #333; }
input[type="checkbox"]:checked::before {
  content: ""; width: 10px; height: 5px; margin-bottom: 4px;
  border: solid #333; border-width: 0 0 1px 1px; transform: rotate(-45deg);
}

/* results */
.stations { table-layout: fixed; width: 806px; border-collapse: collapse; }
.stations th, .stations td { padding: 5px 12px; text-align: left; white-space: nowrap; height: 31px; line-height: 20px; }
.stations th { height: 32px; border-bottom: 2px solid #f4f4f4; }
.stations tbody tr + tr td { border-top: 1px solid #f4f4f4; }
.stations .num { text-align: right; padding-left: 4px; }
.c-name { width: 156px; } .c-status { width: 79px; } .c-type { width: 80px; }
.c-cars { width: 84px; } .c-trucks { width: 76px; } .c-total { width: 83px; }
.c-terminal { width: 88px; } .c-distance { width: 77px; } .c-opt { width: 83px; }

/* optimization panel */
.panel { border: 1px solid #f39c12; border-radius: 3px; background: #fff; box-shadow: 0 1px 1px rgba(0, 0, 0, .1); }
.panel-head, .brands { display: flex; align-items: center; justify-content: space-between; color: #fff; }
.panel-head { height: 40px; padding: 0 10px; background: #f39c12; }
.brands { height: 42px; margin: 10px 0 20px; padding: 0 10px; border-radius: 3px; background: #3c8dbc; }
.panel h2, .panel h3 { margin: 0; padding-bottom: 4px; font-size: 16px; line-height: 20px; font-weight: 400; }
.tool { display: grid; padding: 0 5px 2px; border: 0; background: none; color: #fff; }
.tool svg { width: 12px; height: 12px; stroke: #fff; stroke-width: 3; }
.panel-body { padding: 10px; }
fieldset { margin: 0 0 10px; padding: 0; border: 0; min-width: 0; }
legend { padding: 0; margin-bottom: 5px; font-weight: 700; }
.choice { display: flex; align-items: flex-start; gap: 4px; height: 25px; }
.choice input[type] { margin-top: 4px; }
.field { margin-bottom: 15px; }
.field > label { display: block; margin-bottom: 5px; font-weight: 700; }
.text { display: block; width: 100%; height: 34px; padding: 5px 12px 7px; border: 1px solid #d2d6de; background: #fff; color: #555; }
.calc { display: block; height: 34px; padding: 0 12px 2px; border: 1px solid #8c8c8c; border-radius: 3px; background: #e7e7e7; }

.slider { position: relative; height: 60px; }
.badges { display: flex; justify-content: space-between; height: 18px; align-items: flex-start; font-size: 9px; line-height: 15px; }
.badges span, .badges output { padding: 0 3px; border-radius: 3px; background: #e6e6e6; }
.badges output {
  position: absolute; top: 0; left: calc(11px + (100% - 22px) * var(--pos));
  transform: translateX(-50%); background: #428bca; color: #fff; font-size: 10px; line-height: 16px;
}
.slider input {
  position: relative; z-index: 1; appearance: none; display: block; width: 100%; height: 22px; margin: 0; background: none;
}
.slider input::-webkit-slider-runnable-track {
  height: 8px; border: 1px solid #ccc; border-radius: 8px;
  background: linear-gradient(#428bca, #428bca) 0 0 / calc(11px + (100% - 22px) * var(--pos)) 100% no-repeat border-box, #eee;
}
.slider input::-webkit-slider-thumb {
  appearance: none; width: 22px; height: 22px; margin-top: -8px;
  border: 1px solid #ababab; border-radius: 50%; background: #dedede; box-shadow: 1px 1px 3px rgba(0, 0, 0, .3);
}
.ticks { display: flex; justify-content: space-between; margin: -7px 11px 0; }
.ticks i { display: flex; justify-content: center; width: 0; font-style: normal; font-size: 8px; line-height: 12px; color: #999; position: relative; padding-top: 12px; }
.ticks i::before { content: ""; position: absolute; top: 0; left: 0; width: 1px; height: 4px; background: #9ab; }
.ticks .major::before { height: 8px; }
```
